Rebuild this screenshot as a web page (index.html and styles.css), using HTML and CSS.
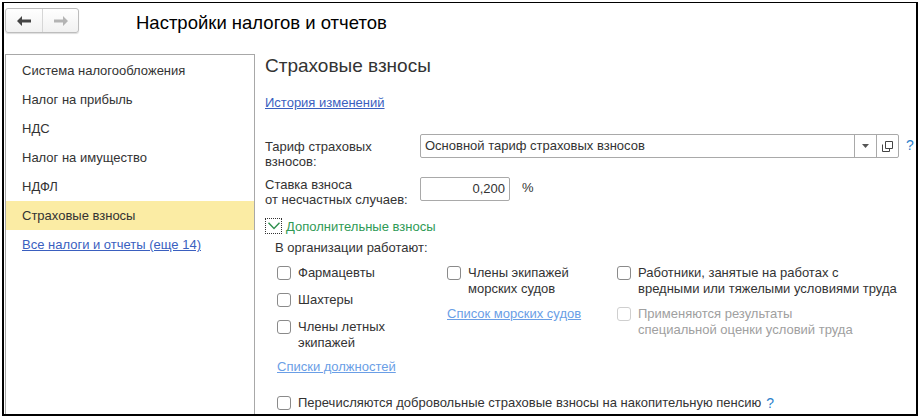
FILE: index.html
```html
<!DOCTYPE html>
<html lang="ru">
<head>
    <meta charset="UTF-8">
    <title>Настройки налогов и отчетов</title>
    <link rel="stylesheet" href="styles.css">
</head>
<body>
<div class="window">
    <div class="header">
        <div class="nav">
            <button class="nav-btn">
                <svg width="14" height="10" viewBox="0 0 14 10"><path d="M0 5 L5 0 L5 3.5 L14 3.5 L14 6.5 L5 6.5 L5 10 Z" fill="#444"/></svg>
            </button>
            <button class="nav-btn">
                <svg width="14" height="10" viewBox="0 0 14 10"><path d="M14 5 L9 0 L9 3.5 L0 3.5 L0 6.5 L9 6.5 L9 10 Z" fill="#b4b4b4"/></svg>
            </button>
        </div>
        <h1>Настройки налогов и отчетов</h1>
    </div>

    <div class="main">
        <div class="sidebar">
            <div class="side-item">Система налогообложения</div>
            <div class="side-item">Налог на прибыль</div>
            <div class="side-item">НДС</div>
            <div class="side-item">Налог на имущество</div>
            <div class="side-item">НДФЛ</div>
            <div class="side-item active">Страховые взносы</div>
            <div class="side-item"><a href="#" class="link">Все налоги и отчеты (еще 14)</a></div>
        </div>

        <div class="content">
            <h2>Страховые взносы</h2>
            <a href="#" class="link history">История изменений</a>

            <div class="field-row tariff">
                <label class="field-label">Тариф страховых<br>взносов:</label>
                <div class="select">
                    <span class="select-text">Основной тариф страховых взносов</span>
                    <span class="select-btn">
                        <svg width="7" height="4" viewBox="0 0 7 4"><path d="M0 0 L7 0 L3.5 4 Z" fill="#555"/></svg>
                    </span>
                    <span class="select-btn">
                        <svg width="11" height="11" viewBox="0 0 11 11"><path d="M3.5 0.5 H10.5 V7.5 H3.5 Z M0.5 3.5 V10.5 H7.5 V7.5" fill="none" stroke="#444"/></svg>
                    </span>
                </div>
                <span class="help">?</span>
            </div>

            <div class="field-row rate">
                <label class="field-label">Ставка взноса<br>от несчастных случаев:</label>
                <div class="num-input">0,200</div>
                <span class="percent">%</span>
            </div>

            <div class="group-title">
                <span class="chevron">
                    <svg width="12" height="8" viewBox="0 0 12 8"><path d="M0.5 0.8 L6 6.5 L11.5 0.8" fill="none" stroke="#2f8f4e" stroke-width="1.4"/></svg>
                </span>
                <span>Дополнительные взносы</span>
            </div>

            <div class="group">
                <div class="group-caption">В организации работают:</div>
                <div class="columns">
                    <div class="col col1">
                        <div class="check"><span class="box"></span><span>Фармацевты</span></div>
                        <div class="check"><span class="box"></span><span>Шахтеры</span></div>
                        <div class="check"><span class="box"></span><span>Члены летных<br>экипажей</span></div>
                        <a href="#" class="link light col-link">Списки должностей</a>
                    </div>
                    <div class="col col2">
                        <div class="check"><span class="box"></span><span>Члены экипажей<br>морских судов</span></div>
                        <a href="#" class="link light">Список морских судов</a>
                    </div>
                    <div class="col col3">
                        <div class="check"><span class="box"></span><span>Работники, занятые на работах с<br>вредными или тяжелыми условиями труда</span></div>
                        <div class="check disabled"><span class="box"></span><span>Применяются результаты<br>специальной оценки условий труда</span></div>
                    </div>
                </div>
                <div class="check pension"><span class="box"></span><span>Перечисляются добровольные страховые взносы на накопительную пенсию</span><span class="help">?</span></div>
            </div>
        </div>
    </div>
</div>
</body>
</html>
```

FILE: styles.css
```css
/* 1C form look */
body {
    font-family: "Liberation Sans", Arial, sans-serif;
    font-size: 13px;
    color: #333;
    background-color: #fff;
    margin: 0;
    padding: 2px 2px 3px 2px;
}

.window {
    box-sizing: border-box;
    height: 414px;
    border: 2px solid #000;
    border-top-width: 1px;
    overflow: hidden;
    display: flex;
    flex-direction: column;
}

.header {
    display: flex;
    align-items: flex-start;
    height: 51px;
    flex-shrink: 0;
    padding-left: 1px;
}

.nav {
    display: flex;
    margin-top: 5px;
    border: 1px solid #bdbdbd;
    border-radius: 3px;
    background: linear-gradient(#fff, #f1f1f1);
    box-shadow: 0 1px 1px #ddd;
}

.nav-btn {
    width: 36px;
    height: 23px;
    border: none;
    background: none;
    padding: 0;
    display: flex;
    align-items: center;
    justify-content: center;
}

.nav-btn + .nav-btn {
    border-left: 1px solid #d6d6d6;
}

h1 {
    font-size: 18.5px;
    font-weight: normal;
    color: #000;
    margin: 9px 0 0 57px;
}

.main {
    display: flex;
    flex: 1;
}

.sidebar {
    width: 248px;
    border: 1px solid #a8a8a8;
    border-bottom: none;
    margin-left: 1px;
    padding-top: 1px;
}

.side-item {
    height: 29px;
    line-height: 29px;
    padding-left: 16px;
}

.side-item.active {
    background-color: #fbeca4;
}

.link {
    color: #3a5fbf;
    text-decoration: underline;
}

.link.light {
    color: #6a9ee6;
}

.content {
    flex: 1;
    padding-left: 10px;
}

h2 {
    font-size: 19px;
    font-weight: normal;
    color: #333;
    margin: 1px 0 0 0;
}

.history {
    display: inline-block;
    margin-top: 18px;
}

.field-row {
    display: flex;
    align-items: flex-start;
}

.tariff {
    margin-top: 24px;
}

.field-label {
    width: 155px;
    line-height: 15px;
    padding-top: 5px;
}

.select {
    display: flex;
    width: 477px;
    height: 22px;
    border: 1px solid #a9a9a9;
    border-radius: 2px;
}

.select-text {
    flex: 1;
    line-height: 22px;
    padding-left: 4px;
}

.select-btn {
    width: 21px;
    border-left: 1px solid #a9a9a9;
    display: flex;
    align-items: center;
    justify-content: center;
}

.help {
    color: #2d82cc;
    font-size: 14px;
    margin-left: 7px;
    line-height: 22px;
}

.rate {
    margin-top: 8px;
}

.rate .field-label {
    padding-top: 0;
}

.num-input {
    width: 84px;
    height: 22px;
    line-height: 22px;
    border: 1px solid #a9a9a9;
    border-radius: 2px;
    text-align: right;
    padding-right: 4px;
}

.percent {
    margin-left: 12px;
    line-height: 22px;
}

.group-title {
    display: flex;
    align-items: center;
    margin-top: 11px;
    color: #2f9a55;
}

.chevron {
    width: 15px;
    height: 14px;
    border: 1px dotted #333;
    display: flex;
    align-items: center;
    justify-content: center;
    margin-right: 4px;
}

.group {
    padding-left: 10px;
}

.group-caption {
    margin-top: 6px;
}

.columns {
    display: flex;
    margin-top: 10px;
}

.col {
    display: flex;
    flex-direction: column;
    gap: 11px;
}

.col1 {
    width: 170px;
    padding-left: 2px;
}

.col2 {
    width: 170px;
    gap: 9px;
}

.check {
    display: flex;
    align-items: flex-start;
    line-height: 16px;
}

.box {
    box-sizing: border-box;
    width: 14px;
    height: 14px;
    border: 1px solid #8a8a8a;
    border-radius: 3px;
    margin: 1px 7px 0 0;
    flex-shrink: 0;
}

.check.disabled {
    color: #a0a0a0;
    margin-top: -2px;
}

.check.disabled .box {
    border-color: #cfcfcf;
}

.col-link {
    margin-top: -3px;
}

.pension {
    margin-top: 21px;
    padding-left: 2px;
}

.pension .help {
    margin-left: 5px;
    line-height: 16px;
}
```
